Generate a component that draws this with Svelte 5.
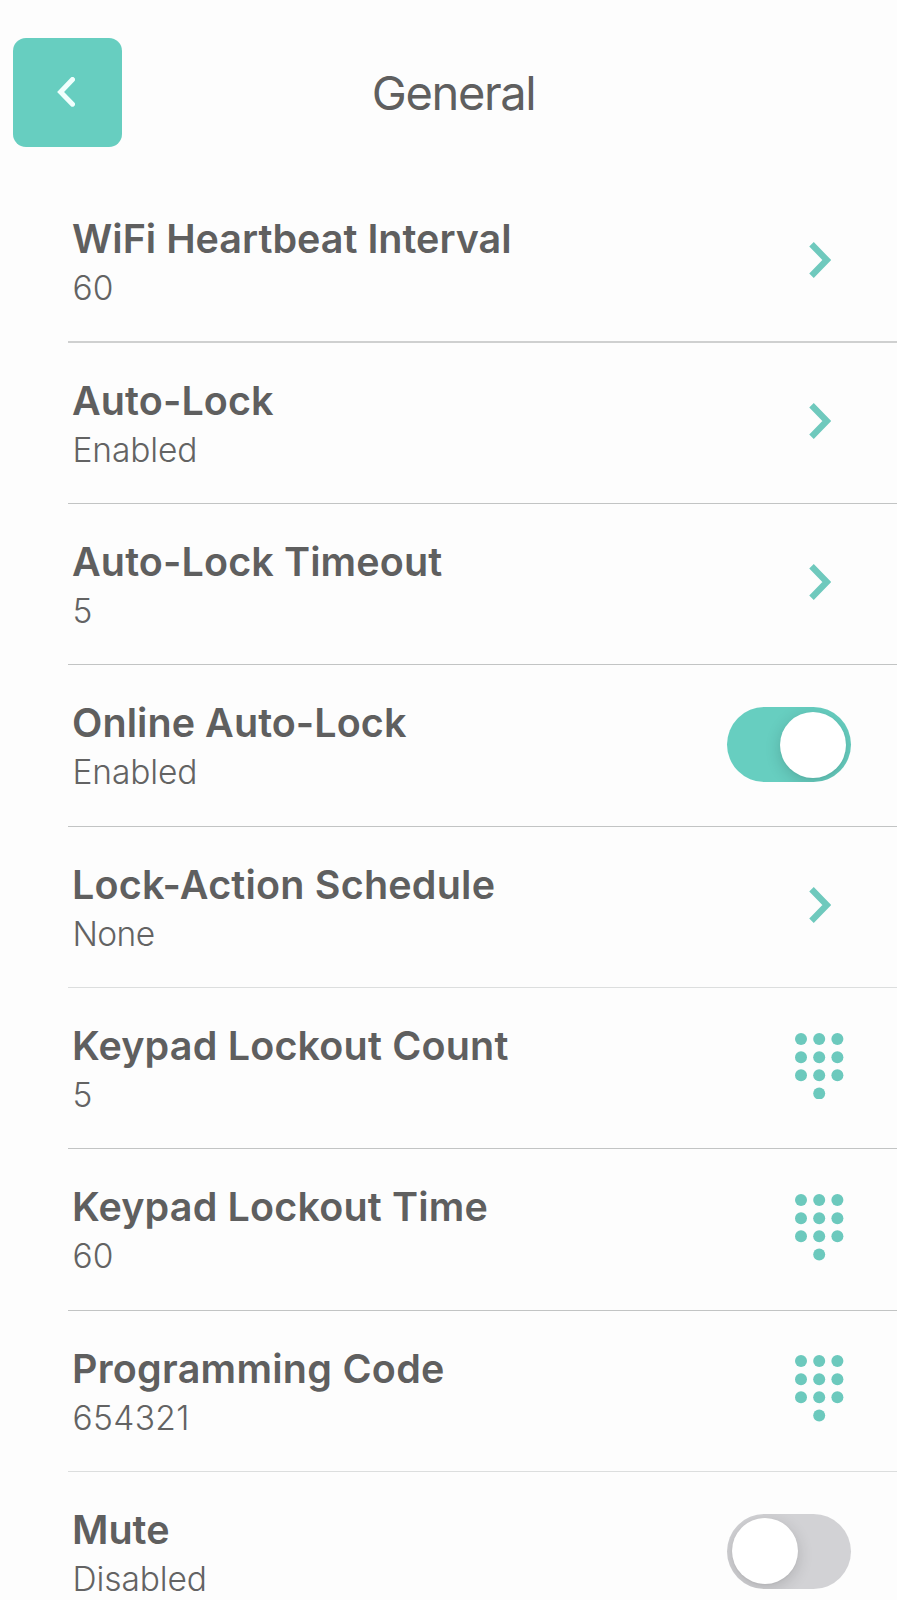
<script lang="ts">
  type Kind = 'link' | 'switch' | 'keypad';
  type Row = { label: string; value: string; kind: Kind; on?: boolean; line: string; ls: number; vs: number };

  // ls and vs are the tracking, in pixels, of the label and the value
  const rows: Row[] = [
    { label: 'WiFi Heartbeat Interval', value: '60', kind: 'link', line: 'thick', ls: 0, vs: 0 },
    { label: 'Auto-Lock', value: 'Enabled', kind: 'link', line: '', ls: 0.1, vs: -0.1 },
    { label: 'Auto-Lock Timeout', value: '5', kind: 'link', line: '', ls: 0.12, vs: 0 },
    { label: 'Online Auto-Lock', value: 'Enabled', kind: 'switch', on: true, line: '', ls: 0.06, vs: -0.1 },
    { label: 'Lock-Action Schedule', value: 'None', kind: 'link', line: 'faint', ls: 0.2, vs: -0.6 },
    { label: 'Keypad Lockout Count', value: '5', kind: 'keypad', line: '', ls: 0.18, vs: 0 },
    { label: 'Keypad Lockout Time', value: '60', kind: 'keypad', line: '', ls: 0.17, vs: 0 },
    { label: 'Programming Code', value: '654321', kind: 'keypad', line: 'faint', ls: 0.26, vs: 0.35 },
    { label: 'Mute', value: 'Disabled', kind: 'switch', on: false, line: '', ls: 0, vs: -0.1 }
  ];
  const dots = [[6, 6], [24.2, 6], [42.4, 6], [6, 24.2], [24.2, 24.2], [42.4, 24.2], [6, 42.3], [24.2, 42.3], [42.4, 42.3], [24.2, 60.5]];
</script>

<div class="screen">
  <header>
    <button class="back" aria-label="Back">
      <svg width="18" height="30" viewBox="0 0 18 30"><path d="M15.5 2.5 3.6 15 15.5 27.2" /></svg>
    </button>
    <h1>General</h1>
  </header>
  <main>
    {#each rows as r}
      <section class="row {r.line}">
        <div class="text">
          <h2 style:letter-spacing="{r.ls}px">{r.label}</h2>
          <p style:letter-spacing="{r.vs}px">{r.value}</p>
        </div>
        <div class="control {r.kind}">
          {#if r.kind === 'link'}
            <svg class="chevron" width="22" height="36" viewBox="0 0 22 36"><path d="M2.5 2.3 17.8 18 2.5 33.7" /></svg>
          {:else if r.kind === 'keypad'}
            <svg class="pad" width="48.4" height="66.5" viewBox="0 0 48.4 66.5">
              {#each dots as [x, y]}<circle cx={x} cy={y} r="6" />{/each}
            </svg>
          {:else}
            <div class="toggle" class:on={r.on}><span></span></div>
          {/if}
        </div>
      </section>
    {/each}
  </main>
</div>

<style>
  :global(body) { margin: 0; background: #fdfdfd; }
  .screen {
    width: 897px; height: 1600px; overflow: hidden; box-sizing: border-box;
    padding-top: 38px; background: #fdfdfd; color: #5f5f5f;
    font-family: Inter, "Liberation Sans", sans-serif;
  }
  header {
    display: grid; grid-template-columns: 122px 1fr 112px; height: 143.6px;
    box-sizing: border-box;
  }
  .back {
    display: flex; align-items: center; justify-content: center;
    width: 109px; height: 109px; margin: 0 0 0 13px; padding: 0 3px 2px 0; box-sizing: border-box;
    border: 0; border-radius: 13px; background: #67cec0;
  }
  .back path { fill: none; stroke: #f1fffd; stroke-width: 5; stroke-linecap: round; stroke-linejoin: miter; }
  h1 { margin: 0; text-align: center; font-size: 47px; font-weight: 400; line-height: 56px; padding-top: 27px; letter-spacing: -1.4px; }
  .row {
    display: flex; justify-content: space-between; box-sizing: border-box;
    height: 161.3px; margin-left: 68px; border-bottom: 1px solid #c2c4c4;
  }
  .thick { border-bottom: 2px solid #cfd0d0; }
  .faint { border-bottom-color: #dcdede; }
  .text { padding: 33.9px 0 0 4px; white-space: nowrap; }
  h2 { margin: 0; font-size: 39.5px; font-weight: 600; line-height: 48px; }
  p { margin: 5px 0 0 0.5px; font-size: 33.5px; font-weight: 300; line-height: 40px; color: #636363; }
  .control { display: flex; justify-content: center; align-items: center; width: 124px; height: 156px; margin-right: 46px; }
  .switch { height: 158.8px; }
  .chevron { margin-left: 62px; }
  .chevron path { fill: none; stroke: #6fc9bd; stroke-width: 6.3; }
  .pad { margin-left: 61px; fill: #6cc9bd; }
  .toggle {
    display: flex; align-items: center; width: 123.5px; height: 75px; box-sizing: border-box; padding: 0 4.4px;
    border-radius: 38px; background: #d2d2d5; overflow: hidden;
  }
  .toggle span { width: 66px; height: 66px; border-radius: 50%; background: #fff; box-shadow: 0 4px 16px rgb(0 0 0 / 0.16), 0 1px 2px rgb(0 0 0 / 0.04); }
  .on { justify-content: flex-end; background: #67cec0; }
</style>
